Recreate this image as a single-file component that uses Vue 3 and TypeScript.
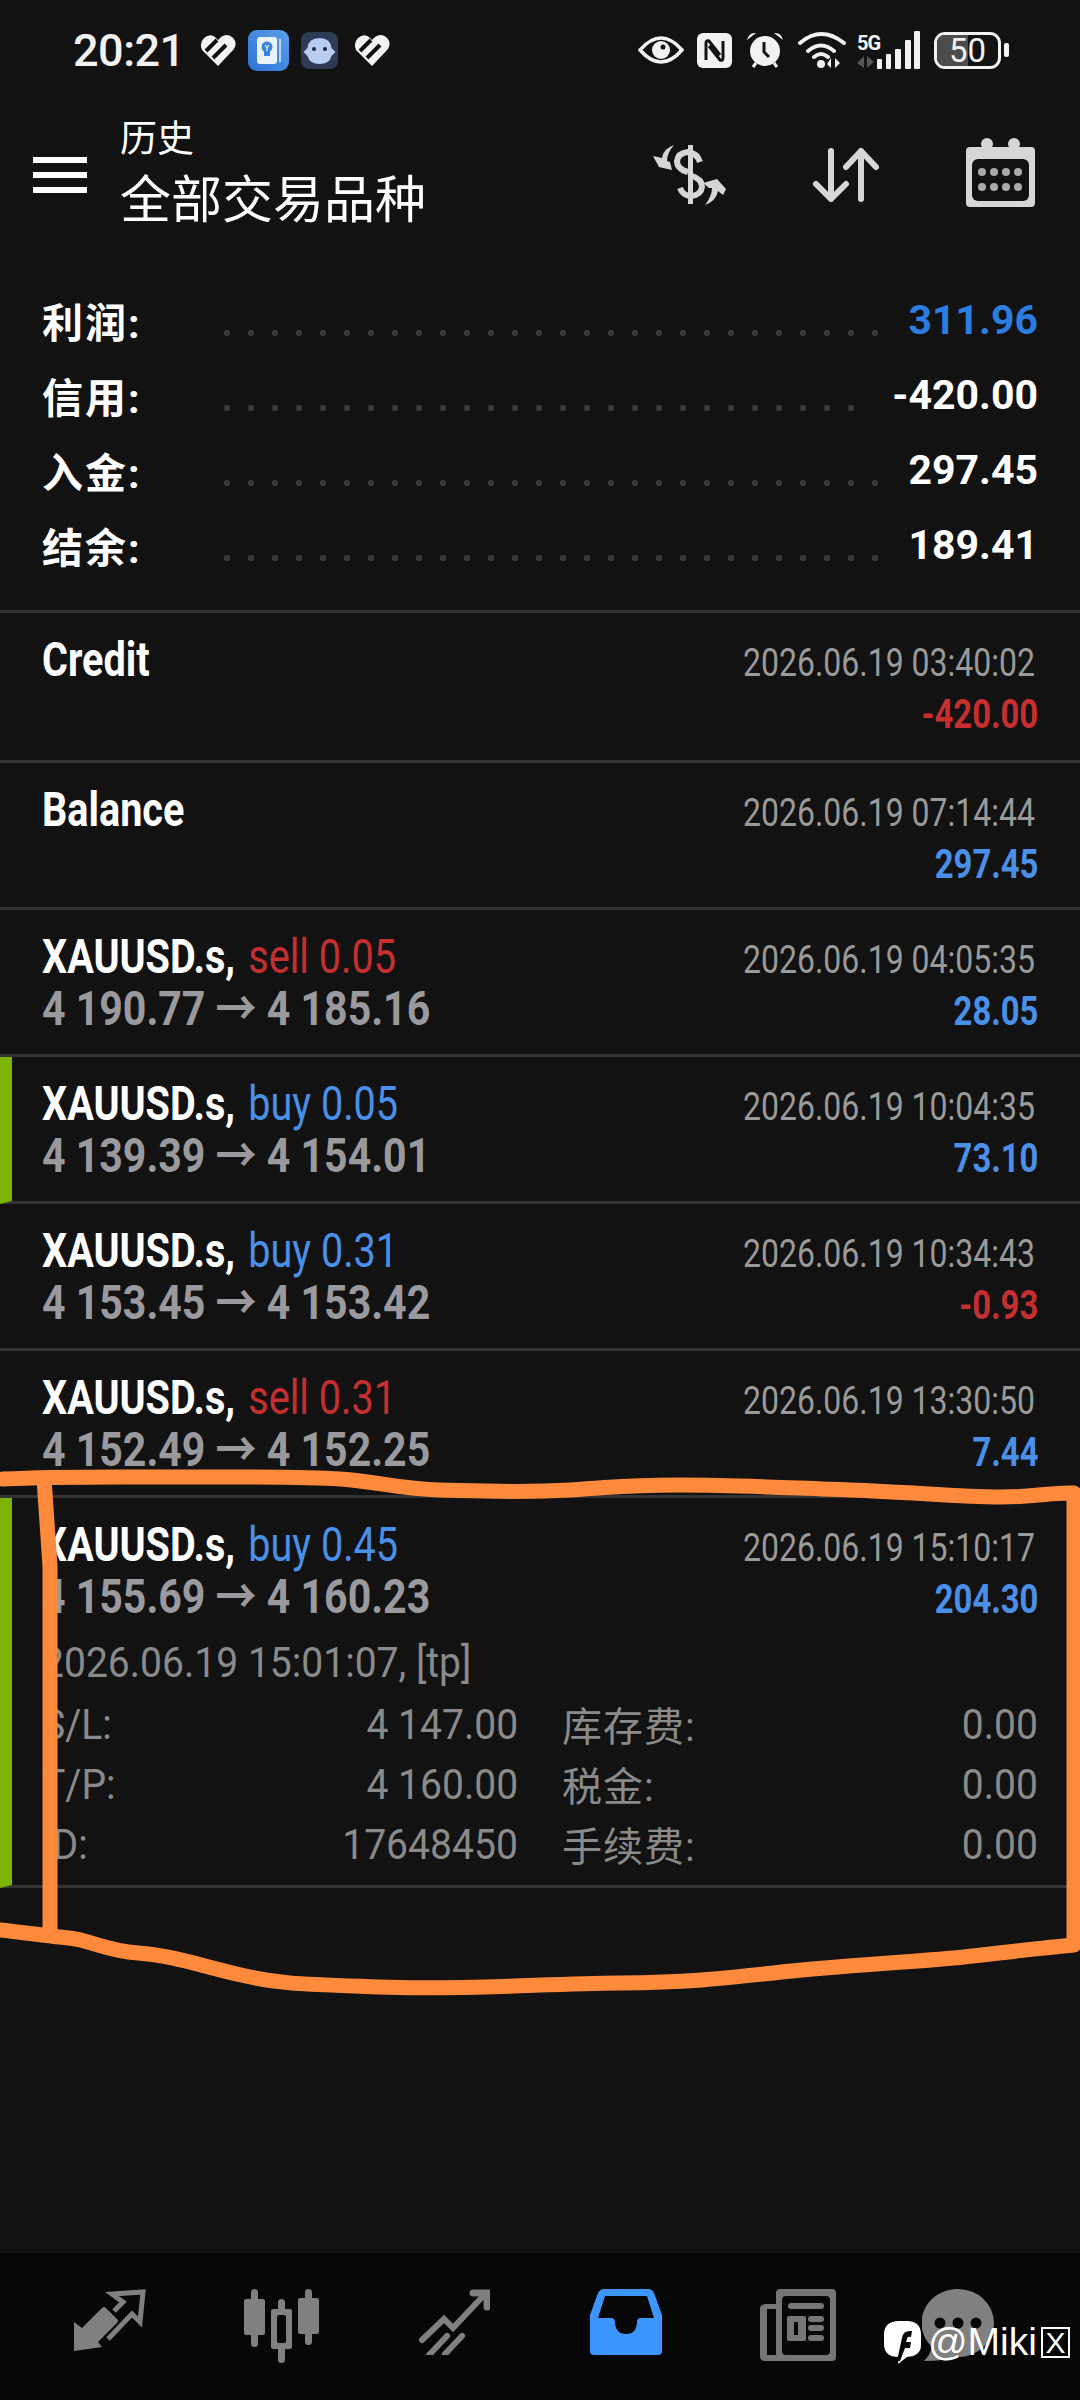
<script setup lang="ts">
interface Trade {
  symbol: string
  side?: string
  prices?: string
  time: string
  profit: string
  marked?: boolean
  loss?: boolean
}

const summary = [
  { label: '利润:', value: '311.96', blue: true },
  { label: '信用:', value: '-420.00' },
  { label: '入金:', value: '297.45' },
  { label: '结余:', value: '189.41' }
]

const trades: Trade[] = [
  { symbol: 'Credit', time: '2026.06.19 03:40:02', profit: '-420.00', loss: true },
  { symbol: 'Balance', time: '2026.06.19 07:14:44', profit: '297.45' },
  { symbol: 'XAUUSD.s,', side: 'sell 0.05', prices: '4 190.77 → 4 185.16', time: '2026.06.19 04:05:35', profit: '28.05' },
  { symbol: 'XAUUSD.s,', side: 'buy 0.05', prices: '4 139.39 → 4 154.01', time: '2026.06.19 10:04:35', profit: '73.10', marked: true },
  { symbol: 'XAUUSD.s,', side: 'buy 0.31', prices: '4 153.45 → 4 153.42', time: '2026.06.19 10:34:43', profit: '-0.93', loss: true },
  { symbol: 'XAUUSD.s,', side: 'sell 0.31', prices: '4 152.49 → 4 152.25', time: '2026.06.19 13:30:50', profit: '7.44' }
]

const openTrade: Trade = {
  symbol: 'XAUUSD.s,',
  side: 'buy 0.45',
  prices: '4 155.69 → 4 160.23',
  time: '2026.06.19 15:10:17',
  profit: '204.30',
  marked: true
}

const details = [
  { a: 'S/L:', b: '4 147.00', c: '库存费:', d: '0.00' },
  { a: 'T/P:', b: '4 160.00', c: '税金:', d: '0.00' },
  { a: 'ID:', b: '17648450', c: '手续费:', d: '0.00' }
]
</script>

<template>
  <div class="screen">
    <div class="status">
      <span class="clock">20:21</span>
      <svg class="st-heart" width="36" height="32" viewBox="0 0 36 32"><path d="M18 32 2 16Q-1 9 4 4q6-5 11-1l3 3 3-3q6-4 11 0 6 5 2 12Z" fill="#f2f2f2" /><path d="M6 17 17 6M13 24 26 11" stroke="#121212" stroke-width="4" fill="none" /></svg>
      <svg class="st-app" width="41" height="41" viewBox="0 0 41 41">
        <defs><linearGradient id="appBg" x1="0" y1="1" x2="1" y2="0"><stop offset="0" stop-color="#2f72d6" /><stop offset="1" stop-color="#5aa0ea" /></linearGradient></defs>
        <rect width="41" height="41" rx="9" fill="url(#appBg)" />
        <rect x="9" y="7" width="20" height="27" rx="3" fill="#eaf2fc" />
        <rect x="31" y="9" width="2" height="23" fill="#bcd6f5" />
        <circle cx="19" cy="17" r="5.500" fill="#3b83e0" />
        <path d="M16 21h6v5h-6Z" fill="#3b83e0" />
        <path d="M17 15l2 3 2-3M19 18v3" stroke="#eaf2fc" stroke-width="1.200" fill="none" />
      </svg>
      <svg class="st-bot" width="37" height="37" viewBox="0 0 37 37">
        <rect width="37" height="37" rx="8" fill="#2f3b55" />
        <path d="M18.500 6q11 0 12 10l4 4-4 4q-2 8-12 8t-12-8l-4-4 4-4q1-10 12-10Z" fill="#b9cdf2" />
        <circle cx="13" cy="17" r="2" fill="#22283a" /><circle cx="24" cy="17" r="2" fill="#22283a" />
      </svg>
      <svg class="st-heart" width="36" height="32" viewBox="0 0 36 32"><path d="M18 32 2 16Q-1 9 4 4q6-5 11-1l3 3 3-3q6-4 11 0 6 5 2 12Z" fill="#f2f2f2" /><path d="M6 17 17 6M13 24 26 11" stroke="#121212" stroke-width="4" fill="none" /></svg>

      <div class="status-right">
        <svg width="46" height="30" viewBox="0 0 46 30"><path d="M2 15Q23-9 44 15 23 39 2 15Z" fill="none" stroke="#f2f2f2" stroke-width="3.500" /><circle cx="23" cy="15" r="9" fill="#f2f2f2" /><circle cx="25" cy="12" r="2.500" fill="#121212" /></svg>
        <svg class="ic-nfc" width="35" height="35" viewBox="0 0 35 35"><rect width="35" height="35" rx="6" fill="#f2f2f2" /><path d="M9 27V10q0-3 3-2l11 14M26 8v17q0 3-3 2L12 13" fill="none" stroke="#121212" stroke-width="3" /></svg>
        <svg class="ic-alarm" width="38" height="38" viewBox="0 0 38 38"><circle cx="19" cy="20" r="15" fill="#f2f2f2" /><path d="M1 9Q3 1 10 2ZM37 9Q35 1 28 2Z" fill="#f2f2f2" /><path d="M7 36 10 32M31 36 28 32" stroke="#f2f2f2" stroke-width="3" /><path d="M18 11v10l5 5" fill="none" stroke="#121212" stroke-width="3" /></svg>
        <svg class="ic-wifi" width="48" height="38" viewBox="0 0 48 38"><path d="M2 12Q23-6 46 12M10 20Q23 9 36 20M16 26Q23 20 30 26" fill="none" stroke="#f2f2f2" stroke-width="4" stroke-linecap="round" /><circle cx="23" cy="33" r="4" fill="#f2f2f2" /><path d="M33 37V27l-4 6ZM37 27v10l5-5Z" fill="#f2f2f2" /></svg>
        <div class="net">
          <span class="five-g">5G</span>
          <svg width="18" height="12" viewBox="0 0 18 12"><path d="M7 12V0L0 7ZM10 0v12l7-6Z" fill="#555" /></svg>
        </div>
        <svg class="bars" width="44" height="38" viewBox="0 0 44 38"><rect x="1" y="28" width="5" height="10" rx="1" fill="#f2f2f2" /><rect x="10" y="23" width="5" height="15" rx="1" fill="#f2f2f2" /><rect x="19" y="18" width="6" height="20" rx="1" fill="#f2f2f2" /><rect x="29" y="9" width="6" height="29" rx="1" fill="#f2f2f2" /><rect x="38" y="0" width="6" height="38" rx="1" fill="#f2f2f2" /></svg>
        <div class="battery">
          <span class="battery-fill"></span>
          <span class="battery-num">50</span>
        </div>
        <span class="battery-nub"></span>
      </div>
    </div>

    <header class="toolbar">
      <div class="menu"><span></span><span></span><span></span></div>
      <div class="titles">
        <div class="title-sm">历史</div>
        <div class="title-lg">全部交易品种</div>
      </div>
      <svg class="tb-dollar" width="74" height="62" viewBox="0 0 74 62">
        <path d="M35 1h5v59h-5z" fill="#d6d6d6" />
        <path d="M47 18Q44 9 35 8 25 9 24 17q0 8 11 11M27 44q3 8 11 8 10-1 11-9 0-8-10-11" fill="none" stroke="#d6d6d6" stroke-width="6" />
        <path d="M21 1Q10 5 9 14L0 12l6 11 13 3-2-8-3-1Q14 9 21 1ZM52 61q11-4 13-14l5 4L73 45 64 35l-14 4 6 5 3 0Q59 52 52 61Z" fill="#d6d6d6" />
      </svg>
      <svg class="tb-sort" width="67" height="56" viewBox="0 0 67 56" fill="none" stroke="#d6d6d6" stroke-width="6" stroke-linecap="round" stroke-linejoin="round">
        <path d="M18 4v48M3 37l15 15 15-15M48 52V4M33 20 48 4l15 16" />
      </svg>
      <svg class="tb-cal" width="69" height="69" viewBox="0 0 69 69">
        <path d="M4 9h61q4 0 4 4v52q0 4-4 4H4q-4 0-4-4V13q0-4 4-4Z" fill="#d6d6d6" />
        <circle cx="21" cy="6" r="6" fill="#d6d6d6" />
        <circle cx="48" cy="6" r="6" fill="#d6d6d6" />
        <rect x="6" y="21" width="57" height="42" rx="6" fill="#121212" />
        <g fill="#aaa">
          <circle cx="16" cy="34" r="4" /><circle cx="28" cy="34" r="4" /><circle cx="40" cy="34" r="4" /><circle cx="52" cy="34" r="4" />
          <circle cx="16" cy="49" r="4" /><circle cx="28" cy="49" r="4" /><circle cx="40" cy="49" r="4" /><circle cx="52" cy="49" r="4" />
        </g>
      </svg>
    </header>

    <section class="summary">
      <div v-for="item in summary" :key="item.label" class="sum-row">
        <span class="sum-label">{{ item.label }}</span>
        <span class="sum-dots"></span>
        <span class="sum-value" :class="{ 'sum-blue': item.blue }">{{ item.value }}</span>
      </div>
    </section>

    <section class="list">
      <div v-for="(t, i) in trades" :key="i" class="trade" :class="{ marked: t.marked, first: i === 0 }">
        <div class="trade-main">
          <div class="line1">
            <span class="narrow">
              <span class="sym">{{ t.symbol }}</span>
              <span v-if="t.side" :class="t.side.startsWith('buy') ? 'side-buy' : 'side-sell'">{{ t.side }}</span>
            </span>
          </div>
          <div v-if="t.prices" class="line2"><span class="narrow">{{ t.prices }}</span></div>
        </div>
        <div class="trade-side">
          <div class="when"><span class="narrow">{{ t.time }}</span></div>
          <div class="pnl" :class="{ 'pnl-loss': t.loss }"><span class="narrow">{{ t.profit }}</span></div>
        </div>
      </div>

      <div class="trade open marked">
        <div class="trade-head">
          <div class="trade-main">
            <div class="line1">
              <span class="narrow"><span class="sym">{{ openTrade.symbol }}</span><span class="side-buy">{{ openTrade.side }}</span></span>
            </div>
            <div class="line2"><span class="narrow">{{ openTrade.prices }}</span></div>
          </div>
          <div class="trade-side">
            <div class="when"><span class="narrow">{{ openTrade.time }}</span></div>
            <div class="pnl"><span class="narrow">{{ openTrade.profit }}</span></div>
          </div>
        </div>
        <div class="opened"><span class="soft">2026.06.19 15:01:07, [tp]</span></div>
        <div v-for="d in details" :key="d.a" class="detail">
          <span class="d-a"><span class="soft">{{ d.a }}</span></span>
          <span class="d-b"><span class="soft-r">{{ d.b }}</span></span>
          <span class="d-c">{{ d.c }}</span>
          <span class="d-d"><span class="soft-r">{{ d.d }}</span></span>
        </div>
      </div>
    </section>

    <nav class="tabs">
      <div class="tab">
        <svg width="72" height="64" viewBox="0 0 72 64">
          <path d="M0 62V33l8 6 20-20q2-2 4 0l11 11q2 2 0 4L24 53l4 5Z" fill="#808080" />
          <path d="M40 22 49 13 38 5 69 3 66 33 58 25 34 50" fill="none" stroke="#808080" stroke-width="5" stroke-linejoin="miter" />
        </svg>
      </div>
      <div class="tab">
        <svg width="76" height="74" viewBox="0 0 76 74" fill="#808080">
          <rect x="7" y="0" width="7" height="58" rx="3.500" /><rect x="0" y="10" width="21" height="36" rx="2" />
          <rect x="34" y="10" width="7" height="64" rx="3.500" /><rect x="27" y="20" width="21" height="40" rx="2" />
          <rect x="61" y="0" width="7" height="56" rx="3.500" /><rect x="54" y="9" width="21" height="36" rx="2" />
          <rect x="33" y="26" width="9" height="28" rx="2" fill="#070707" />
        </svg>
      </div>
      <div class="tab">
        <svg width="71" height="66" viewBox="0 0 71 66" fill="none" stroke="#808080" stroke-width="6" stroke-linecap="round">
          <path d="M3 51 25 30l9 9L66 5" /><path d="M54 4h14v14" stroke-width="7" /><path d="M10 66 28 47" /><path d="M26 65 43 47" stroke-width="6" />
        </svg>
      </div>
      <div class="tab">
        <svg width="72" height="66" viewBox="0 0 72 66">
          <path d="M14 0h44q4 0 6 4l8 22v36q0 4-4 4H4q-4 0-4-4V26L8 4q2-4 6-4Z" fill="#3d95ff" />
          <path d="M15 7h42l7 22H50q-2 0-3 3 0 13-11 13T25 32q-1-3-3-3H8Z" fill="#070707" />
        </svg>
      </div>
      <div class="tab">
        <svg width="76" height="72" viewBox="0 0 76 72">
          <path d="M20 0h52q4 0 4 4v64q0 4-4 4H5q-5 0-5-5V20q0-4 5-5h11V4q0-4 4-4Z" fill="#767676" />
          <rect x="22" y="7" width="48" height="59" rx="4" fill="#070707" />
          <path d="M7 20h9v46H7Z" fill="#070707" />
          <rect x="28" y="14" width="36" height="6" rx="3" fill="#767676" />
          <rect x="27" y="27" width="19" height="25" rx="2" fill="#767676" />
          <rect x="34" y="33" width="4" height="13" fill="#070707" />
          <rect x="48" y="27" width="16" height="6" rx="3" fill="#767676" />
          <rect x="48" y="36" width="16" height="6" rx="3" fill="#767676" />
          <rect x="48" y="46" width="16" height="6" rx="3" fill="#767676" />
        </svg>
      </div>
      <div class="tab tab-chat">
        <svg width="72" height="72" viewBox="0 0 72 72">
          <path d="M36 0a36 34 0 0 1 0 68q-14 4-34 4 6-6 8-14A36 34 0 0 1 36 0Z" fill="#808080" />
          <circle cx="18" cy="34" r="5.500" fill="#070707" /><circle cx="36" cy="34" r="5.500" fill="#070707" /><circle cx="54" cy="34" r="5.500" fill="#070707" />
        </svg>
      </div>
    </nav>

    <div class="mark">
      <svg width="37" height="43" viewBox="0 0 37 43">
        <path d="M15 0h8q14 0 14 14v10q0 11-14 12l-9 7 1-7Q0 36 0 23V14Q0 0 15 0Z" fill="#fff" />
        <path d="M13 40 18 17q1-8 10-7l-1 6q-4-1-4 2l-1 3h5l-1 6h-5l-5 13Z" fill="#070707" />
      </svg>
      <span class="mark-text">@Miki</span><span class="mark-box">X</span>
    </div>

    <svg class="scribble" width="1080" height="2400" viewBox="0 0 1080 2400" fill="none" stroke="#ff8a3c" stroke-width="15" stroke-linecap="round" stroke-linejoin="round">
      <path d="M3 1479C60 1476 120 1477 172 1477S300 1476 340 1479 400 1489 440 1490 520 1493 570 1490 620 1485 680 1485 790 1488 850 1490 960 1497 1000 1497 1050 1492 1074 1493V1945C1040 1948 1000 1953 964 1957S860 1964 792 1971 700 1982 620 1983 460 1990 379 1987 280 1984 241 1975 170 1955 138 1953 90 1940 69 1938 20 1932 0 1930" />
      <path d="M44 1479 50 1566V1930" />
    </svg>
  </div>
</template>

<style>
html,
body {
  margin: 0;
  background: #121212;
}
</style>

<style scoped>
.screen {
  position: relative;
  width: 1080px;
  height: 2400px;
  overflow: hidden;
  display: flex;
  flex-direction: column;
  background: #121212;
  color: #fff;
  font-family: Roboto, "Noto Sans CJK SC", sans-serif;
}

.narrow {
  display: inline-block;
  white-space: nowrap;
  transform: scaleX(0.855);
  transform-origin: left center;
}

.soft {
  display: inline-block;
  white-space: nowrap;
  transform: scaleX(0.93);
  transform-origin: left center;
}

.soft-r {
  display: inline-block;
  white-space: nowrap;
  transform: scaleX(0.93);
  transform-origin: right center;
}

.status {
  height: 100px;
  display: flex;
  align-items: center;
  padding: 0 71px 0 73px;
  box-sizing: border-box;
  flex-shrink: 0;
}

.clock {
  font-size: 45px;
  font-weight: 500;
  color: #f2f2f2;
  width: 127px;
  letter-spacing: -0.5px;
}

.st-app {
  margin: 0 12px;
}

.st-bot {
  margin-right: 16px;
}

.status-right {
  margin-left: auto;
  display: flex;
  align-items: center;
  gap: 11px;
}

.ic-nfc {
  margin-left: 2px;
}

.ic-alarm,
.ic-wifi {
  margin-left: 3px;
}

.net {
  display: flex;
  flex-direction: column;
  width: 28px;
  margin-right: -10px;
  gap: 3px;
}

.five-g {
  font-size: 20px;
  line-height: 20px;
  font-weight: 700;
  color: #f2f2f2;
  letter-spacing: -1px;
}

.bars {
  margin-left: -10px;
  margin-right: 3px;
}

.battery {
  position: relative;
  width: 67px;
  height: 37px;
  box-sizing: border-box;
  border: 3px solid #f2f2f2;
  border-radius: 11px;
  overflow: hidden;
  display: flex;
  align-items: center;
  justify-content: center;
}

.battery-fill {
  position: absolute;
  left: 0;
  top: 0;
  bottom: 0;
  width: 50%;
  background: #4c4c4c;
}

.battery-num {
  position: relative;
  font-size: 33px;
  color: #f2f2f2;
}

.battery-nub {
  width: 5px;
  height: 14px;
  background: #f2f2f2;
  border-radius: 2px;
  margin-left: -8px;
}

.toolbar {
  height: 150px;
  display: flex;
  align-items: center;
  padding-left: 33px;
  box-sizing: border-box;
  flex-shrink: 0;
}

.menu {
  width: 54px;
  display: flex;
  flex-direction: column;
  gap: 9px;
  margin-right: 33px;
}

.menu span {
  height: 6px;
  background: #fff;
}

.titles {
  width: 533px;
}

.title-sm {
  font-size: 37px;
  line-height: 48px;
}

.title-lg {
  font-size: 51px;
  line-height: 66px;
  margin-top: 4px;
}

.tb-dollar {
  margin-right: 86px;
}

.tb-sort {
  margin-right: 86px;
}

.tb-cal {
  margin-top: -6px;
}

.summary {
  padding: 32px 42px 28px;
  height: 360px;
  box-sizing: border-box;
  flex-shrink: 0;
}

.sum-row {
  height: 75px;
  display: flex;
  align-items: center;
}

.sum-label {
  width: 173px;
  font-size: 41px;
  font-weight: 700;
  letter-spacing: 2px;
  white-space: nowrap;
  flex-shrink: 0;
}

.sum-dots {
  flex: 1;
  height: 8px;
  margin-top: 26px;
  background-image: radial-gradient(circle, #383838 3px, transparent 3.5px);
  background-size: 24px 8px;
  background-repeat: repeat-x;
}

.sum-value {
  font-size: 41px;
  font-weight: 700;
  margin-left: 26px;
  flex-shrink: 0;
}

.sum-blue {
  color: #2b7de0;
}

.list {
  border-top: 3px solid #333;
  flex-shrink: 0;
}

.trade {
  height: 147px;
  display: flex;
  justify-content: space-between;
  padding: 21px 42px 0;
  box-sizing: border-box;
  border-bottom: 3px solid #333;
}

.trade.first {
  height: 150px;
}

.marked {
  padding-left: 30px;
  border-left: 12px solid #7cb305;
}

.line1 {
  font-size: 48px;
  line-height: 52px;
  font-weight: 700;
  white-space: nowrap;
}

.line1 .narrow {
  transform: scaleX(0.825);
}

.line2 {
  font-size: 48px;
  line-height: 51px;
  font-weight: 700;
  color: #9a9a9e;
  white-space: nowrap;
}

.side-buy,
.side-sell {
  font-weight: 400;
  margin-left: 16px;
}

.side-buy {
  color: #4a90e8;
}

.side-sell {
  color: #c62f2f;
}

.trade-side {
  display: flex;
  flex-direction: column;
  align-items: flex-start;
  width: 295px;
  padding-top: 3px;
  flex-shrink: 0;
}

.when {
  font-size: 39px;
  line-height: 52px;
  color: #9a9a9a;
  white-space: nowrap;
}

.when .narrow {
  transform: scaleX(0.82);
}

.pnl {
  align-self: flex-end;
  font-size: 40px;
  line-height: 52px;
  font-weight: 700;
  color: #4a90e8;
  white-space: nowrap;
}

.pnl .narrow {
  transform: scaleX(0.82);
  transform-origin: right center;
}

.pnl-loss {
  color: #c62f2f;
}

.open {
  height: 390px;
  display: block;
}

.trade-head {
  display: flex;
  justify-content: space-between;
  height: 121px;
}

.opened {
  font-size: 42px;
  line-height: 46px;
  color: #8a8a8a;
  margin-bottom: 8px;
  white-space: nowrap;
}

.detail {
  display: flex;
  align-items: center;
  height: 60px;
  font-size: 42px;
  color: #8a8a8a;
}

.d-a {
  width: 200px;
}

.d-b {
  width: 276px;
  text-align: right;
}

.d-c {
  margin-left: 44px;
  font-size: 40px;
  letter-spacing: 1px;
  width: 300px;
}

.d-d {
  flex: 1;
  text-align: right;
}

.tabs {
  position: absolute;
  left: 0;
  right: 0;
  bottom: 0;
  height: 147px;
  background: #070707;
  display: flex;
  padding-left: 24px;
  box-sizing: border-box;
  align-items: flex-start;
  padding-top: 36px;
}

.tab {
  width: 172px;
  display: flex;
  justify-content: center;
}

.tab-chat {
  margin-left: -12px;
}

.mark {
  position: absolute;
  left: 884px;
  top: 2320px;
  display: flex;
  align-items: center;
  color: #fff;
}

.mark-text {
  font-family: "Liberation Sans", sans-serif;
  font-size: 39px;
  margin-left: 7px;
  font-weight: 400;
}

.mark-box {
  border: 2px solid #fff;
  box-sizing: border-box;
  font-family: "Liberation Sans", sans-serif;
  font-size: 30px;
  width: 29px;
  height: 31px;
  line-height: 27px;
  text-align: center;
  margin-left: 4px;
}

.scribble {
  position: absolute;
  left: 0;
  top: 0;
  pointer-events: none;
}
</style>
